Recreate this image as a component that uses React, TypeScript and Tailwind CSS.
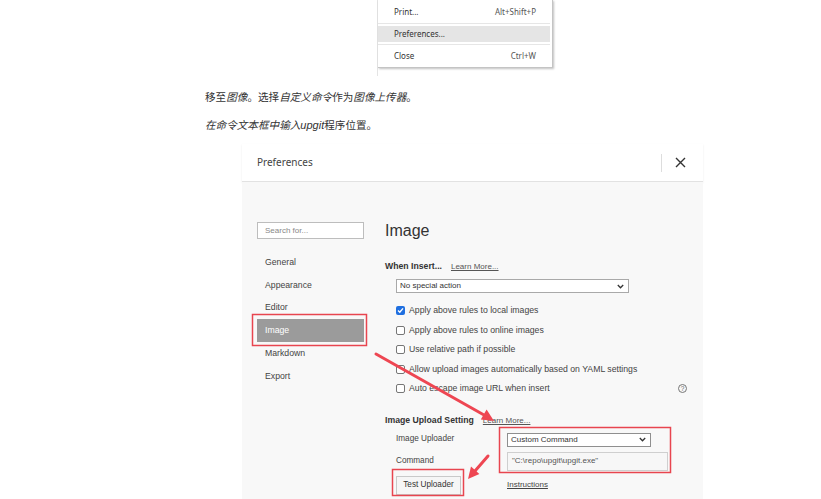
import type { ReactNode } from 'react'

const ui = { fontFamily: '"Liberation Sans", Arial, sans-serif' }
const segoe = { fontFamily: '"Noto Sans", "Open Sans", sans-serif' }
const cjk = { fontFamily: '"Noto Sans CJK SC", "Noto Sans", sans-serif' }

function Chevron() {
  return (
    <svg width="7" height="5" viewBox="0 0 7 5" className="shrink-0">
      <polyline points="0.8,1 3.5,3.8 6.2,1" fill="none" stroke="#333" strokeWidth="1.3" />
    </svg>
  )
}

function Checkbox({ checked }: { checked?: boolean }) {
  if (checked) {
    return (
      <span className="flex h-[9px] w-[9px] shrink-0 items-center justify-center rounded-[2px] bg-[#1f6fe0]">
        <svg width="7" height="7" viewBox="0 0 7 7">
          <polyline points="1,3.6 2.8,5.3 6,1.4" fill="none" stroke="#fff" strokeWidth="1.4" />
        </svg>
      </span>
    )
  }
  return <span className="h-[9px] w-[9px] shrink-0 rounded-[2px] border border-[#767676] bg-white" />
}

function CheckRow({ label, checked, extra }: { label: string; checked?: boolean; extra?: ReactNode }) {
  return (
    <div className="flex h-[19.5px] items-center gap-[4px] pl-[11px] pr-[16px] text-[8.7px] text-[#444]">
      <Checkbox checked={checked} />
      <span>{label}</span>
      {extra}
    </div>
  )
}

const navItems = ['General', 'Appearance', 'Editor', 'Image', 'Markdown', 'Export']

export default function App() {
  return (
    <div className="relative h-[499px] w-[821px] overflow-hidden bg-white">
      {/* menu screenshot */}
      <div className="ml-[377px] h-[76px] w-[177px] border-l border-[#e4e4e4]">
        <div
          className="h-[68px] w-[175px] border-r border-b border-[#c4c4c4] bg-white pt-[1px] text-[8px] text-[#333] shadow-[1px_1px_2px_rgba(0,0,0,0.25)]"
          style={segoe}
        >
          <div className="flex h-[22px] items-center justify-between pl-[16px] pr-[16px]">
            <span>Print...</span>
            <span className="text-[#555]">Alt+Shift+P</span>
          </div>
          <div className="mr-[2px] h-px bg-[#e6e6e6]" />
          <div className="mt-[2px] mr-[2px] flex h-[16px] items-center bg-[#e5e5e5] pl-[16px]">
            <span>Preferences...</span>
          </div>
          <div className="mt-[2px] mr-[2px] h-px bg-[#e6e6e6]" />
          <div className="flex h-[22px] items-center justify-between pl-[16px] pr-[16px]">
            <span>Close</span>
            <span className="text-[#555]">Ctrl+W</span>
          </div>
        </div>
      </div>

      {/* text */}
      <div className="ml-[205px] mt-[13px] text-[10.6px] leading-[16px] text-[#333]" style={cjk}>
        <p>
          移至<i>图像</i>。选择<i>自定义命令</i>作为<i>图像上传器</i>。
        </p>
        <p className="mt-[12px]">
          <i>在命令文本框中输入</i>
          <i style={ui} className="text-[11px]">upgit</i>
          程序位置。
        </p>
      </div>

      {/* preferences screenshot */}
      <div className="ml-[242px] mt-[11px] w-[461px]" style={ui}>
        <div className="flex h-[38px] items-center border-b border-[#e2e2e2] pl-[15px] shadow-[0_1px_2px_rgba(0,0,0,0.08)]">
          <span className="flex-1 text-[10px] text-[#444]" style={segoe}>
            Preferences
          </span>
          <span className="h-[18px] w-px bg-[#ddd]" />
          <span className="ml-[13px] mr-[17px] flex items-center">
            <svg width="11" height="11" viewBox="0 0 11 11">
              <path d="M1 1 L10 10 M10 1 L1 10" stroke="#333" strokeWidth="1.4" />
            </svg>
          </span>
        </div>

        <div className="flex h-[330px] bg-[#f8f8f8]">
          {/* sidebar */}
          <div className="w-[143px] shrink-0 pl-[15px] pt-[40px]">
            <div className="flex h-[17px] w-[107px] items-center border border-[#bdbdbd] bg-white pl-[7px] text-[8px] text-[#888]">
              Search for...
            </div>
            <div className="mt-[12px] w-[107px]">
              {navItems.map((item) => (
                <div
                  key={item}
                  className={`flex h-[22.8px] items-center pl-[8px] text-[8.7px] ${
                    item === 'Image' ? 'bg-[#9b9b9b] text-white' : 'text-[#444]'
                  }`}
                >
                  {item}
                </div>
              ))}
            </div>
          </div>

          {/* main */}
          <div className="flex-1 pt-[39px]">
            <div className="h-[20px] text-[16px] leading-[20px] text-[#333]">Image</div>

            <div className="mt-[19px] flex h-[14px] items-center gap-[9px] text-[8.7px]">
              <span className="font-bold text-[#333]">When Insert...</span>
              <span className="text-[8px] text-[#555] underline">Learn More...</span>
            </div>

            <div className="ml-[11px] mt-[5px] flex h-[14px] w-[233px] items-center justify-between border border-[#a9a9a9] bg-white pl-[3px] pr-[4px] text-[8px] text-[#333]">
              <span>No special action</span>
              <Chevron />
            </div>

            <div className="mt-[8px]">
              <CheckRow checked label="Apply above rules to local images" />
              <CheckRow label="Apply above rules to online images" />
              <CheckRow label="Use relative path if possible" />
              <CheckRow label="Allow upload images automatically based on YAML settings" />
              <CheckRow
                label="Auto escape image URL when insert"
                extra={
                  <span className="ml-auto flex h-[9px] w-[9px] items-center justify-center rounded-full border border-[#777] text-[6.5px] leading-none text-[#666]">
                    ?
                  </span>
                }
              />
            </div>

            <div className="mt-[15px] flex h-[14px] items-center gap-[9px] text-[8.7px]">
              <span className="font-bold text-[#333]">Image Upload Setting</span>
              <span className="text-[8px] text-[#555] underline">Learn More...</span>
            </div>

            <div className="mt-[5px] grid grid-cols-[111px_auto] items-center gap-y-[5px] pl-[11px] text-[8.2px] text-[#444]">
              <span>Image Uploader</span>
              <div className="flex h-[14px] w-[144px] items-center justify-between border border-[#8f8f8f] bg-white pl-[3px] pr-[4px] text-[8px] text-[#333]">
                <span>Custom Command</span>
                <Chevron />
              </div>
              <span>Command</span>
              <div className="flex h-[19px] w-[161px] items-center border border-[#cfcfcf] bg-[#f7f7f7] pl-[4px] text-[8px] text-[#555]">
                "C:\repo\upgit\upgit.exe"
              </div>
              <div className="flex h-[19px] w-[65px] items-center justify-center border border-[#c9c9c9] bg-[#f6f6f6] text-[8.2px] text-[#333]">
                Test Uploader
              </div>
              <span className="text-[8px] text-[#444] underline">Instructions</span>
            </div>
          </div>
        </div>
      </div>

      {/* annotations */}
      <svg className="pointer-events-none absolute inset-0" width="821" height="499">
        <g fill="none" stroke="#e8454f" strokeWidth="1.5">
          <rect x="252.5" y="314.5" width="114" height="31" />
          <rect x="499.5" y="427.5" width="171" height="45" />
          <rect x="392.5" y="469.5" width="71" height="26" />
        </g>
        <g stroke="#ee4652" strokeWidth="3" strokeLinecap="round">
          <line x1="376" y1="354" x2="484" y2="415" />
          <line x1="488" y1="456" x2="475" y2="471" />
        </g>
        <g fill="#ee4652">
          <polygon points="494,421 480.8,419.6 486.6,409.4" />
          <polygon points="468,479 471,466.6 479.4,474" />
        </g>
      </svg>
    </div>
  )
}
